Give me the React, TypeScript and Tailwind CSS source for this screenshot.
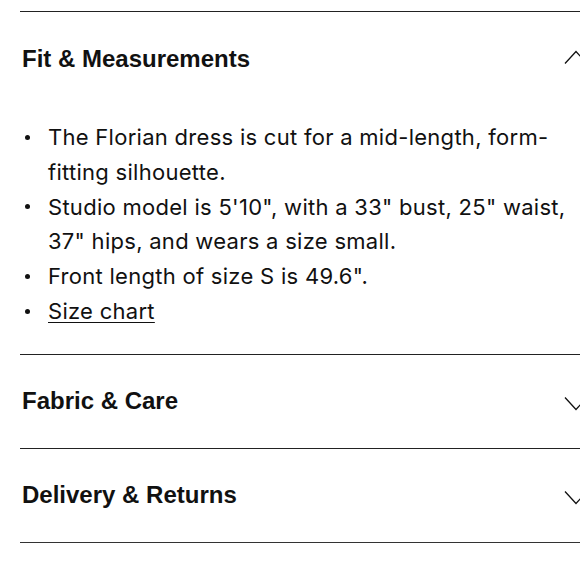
import React from "react";

function Chevron({ up }: { up?: boolean }) {
  return (
    <svg width="24" height="15" viewBox="0 0 24 15" fill="none" stroke="#111" strokeWidth="1.3" className={up ? "mt-[-2px]" : "mt-[4px]"}>
      {up ? <path d="M1 13.5 L12 1.5 L23 13.5" /> : <path d="M1 1.5 L12 13.5 L23 1.5" />}
    </svg>
  );
}

function Bullet() {
  return (
    <span className="w-[28px] shrink-0 flex items-center h-[34.8px] pl-[5px]">
      <span className="block w-[5px] h-[5px] rounded-full bg-[#111]" />
    </span>
  );
}

export default function App() {
  const font = { fontFamily: '"Liberation Sans", Arial, sans-serif' };
  return (
    <div className="w-[580px] h-[579px] overflow-hidden bg-white text-[#111]" style={font}>
      <div className="pt-[11px] pl-5 w-[588px]">
        <section className="border-t border-[#222]">
          <div className="h-[93px] flex items-center justify-between pl-[2px]">
            <h2 className="text-[24px] font-bold">Fit &amp; Measurements</h2>
            <Chevron up />
          </div>
          <ul className="pt-[15px] pb-[25px] text-[22px] leading-[34.8px] pr-[14px] font-['Inter',sans-serif] tracking-[0.28px]">
            <li className="flex">
              <Bullet />
              <span>The Florian dress is cut for a mid-length, form-fitting silhouette.</span>
            </li>
            <li className="flex">
              <Bullet />
              <span>Studio model is 5'10", with a 33" bust, 25" waist, 37" hips, and wears a size small.</span>
            </li>
            <li className="flex">
              <Bullet />
              <span>Front length of size S is 49.6".</span>
            </li>
            <li className="flex">
              <Bullet />
              <span className="underline underline-offset-[3px] decoration-1">Size chart</span>
            </li>
          </ul>
        </section>
        <section className="border-t border-[#222]">
          <div className="h-[93px] flex items-center justify-between pl-[2px]">
            <h2 className="text-[24px] font-bold">Fabric &amp; Care</h2>
            <Chevron />
          </div>
        </section>
        <section className="border-t border-[#222]">
          <div className="h-[93px] flex items-center justify-between pl-[2px]">
            <h2 className="text-[24px] font-bold">Delivery &amp; Returns</h2>
            <Chevron />
          </div>
        </section>
        <div className="border-t border-[#333]" />
      </div>
    </div>
  );
}
